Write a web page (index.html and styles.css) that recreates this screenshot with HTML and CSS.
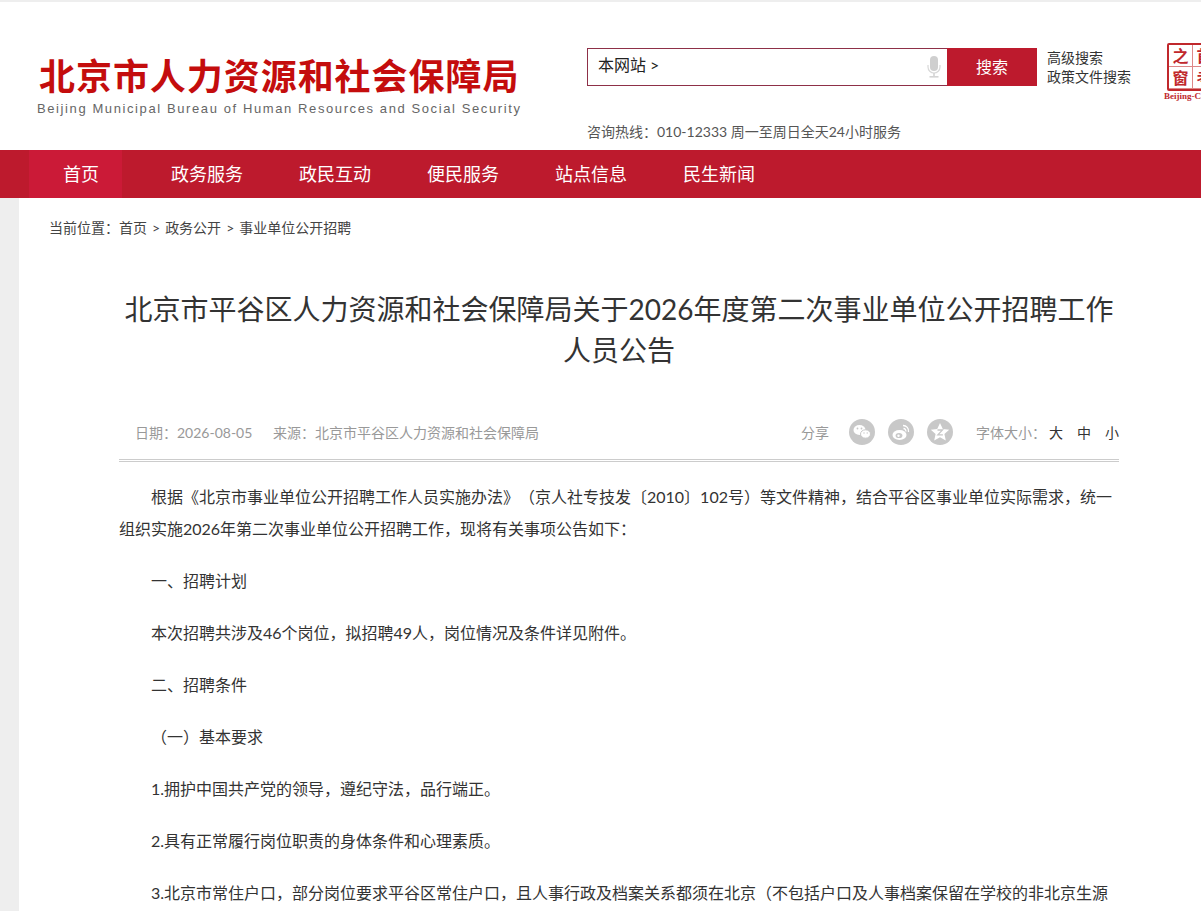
FILE: index.html
```html
<!DOCTYPE html>
<html lang="zh-CN">
<head>
  <meta charset="UTF-8">
  <title>北京市人力资源和社会保障局</title>
  <link rel="stylesheet" href="styles.css">
</head>
<body>
  <div id="page">
    <div id="header">
      <div id="logo">
        <div id="logo-cn">北京市人力资源和社会保障局</div>
        <div id="logo-en">Beijing Municipal Bureau of Human Resources and Social Security</div>
      </div>
      <div id="search-area">
        <div id="search-row">
          <div id="search-box">
            <span id="search-scope">本网站 &gt;</span>
            <svg id="mic" width="14" height="22" viewBox="0 0 14 22">
              <rect x="3" y="0" width="8" height="15" rx="4" fill="#cfcfcf"/>
              <path d="M1 9v2a6 6 0 0 0 12 0V9" fill="none" stroke="#d8d8d8" stroke-width="1.2"/>
              <rect x="6.2" y="17" width="1.6" height="3" fill="#d4d4d4"/>
              <rect x="2.5" y="20" width="9" height="1.6" fill="#d4d4d4"/>
            </svg>
          </div>
          <div id="search-btn">搜索</div>
          <div id="search-links">
            <a>高级搜索</a>
            <a>政策文件搜索</a>
          </div>
          <div id="seal">
            <div id="seal-grid">
              <span>之</span><span>首</span><span>窗</span><span>考</span>
            </div>
            <div id="seal-en">Beijing-Capital</div>
          </div>
        </div>
        <div id="hotline">咨询热线：010-12333 周一至周日全天24小时服务</div>
      </div>
    </div>

    <div id="nav">
      <a class="nav-item active">首页</a>
      <a class="nav-item">政务服务</a>
      <a class="nav-item">政民互动</a>
      <a class="nav-item">便民服务</a>
      <a class="nav-item">站点信息</a>
      <a class="nav-item">民生新闻</a>
    </div>

    <div id="main">
      <div id="crumbs">当前位置：首页<i>&gt;</i>政务公开<i>&gt;</i>事业单位公开招聘</div>
      <div id="article">
        <h1>北京市平谷区人力资源和社会保障局关于2026年度第二次事业单位公开招聘工作人员公告</h1>
        <div id="meta">
          <div id="meta-left">
            <span>日期：2026-08-05</span>
            <span>来源：北京市平谷区人力资源和社会保障局</span>
          </div>
          <div id="meta-right">
            <span class="share-label">分享</span>
            <svg class="share-icon" viewBox="0 0 26 26">
              <circle cx="13" cy="13" r="13" fill="#c8c8c8"/>
              <ellipse cx="10.5" cy="11" rx="6" ry="5" fill="#fff"/>
              <ellipse cx="16.5" cy="15" rx="5" ry="4.2" fill="#fff" stroke="#c8c8c8"/>
              <circle cx="8.5" cy="9.5" r=".9" fill="#c8c8c8"/>
              <circle cx="12.5" cy="9.5" r=".9" fill="#c8c8c8"/>
              <circle cx="15" cy="14" r=".7" fill="#c8c8c8"/>
              <circle cx="18.2" cy="14" r=".7" fill="#c8c8c8"/>
            </svg>
            <svg class="share-icon" viewBox="0 0 26 26">
              <circle cx="13" cy="13" r="13" fill="#c8c8c8"/>
              <ellipse cx="11.5" cy="16" rx="7" ry="5" fill="#fff"/>
              <ellipse cx="11" cy="16.5" rx="3.4" ry="2.6" fill="#c8c8c8"/>
              <circle cx="10.5" cy="16.8" r="1.2" fill="#fff"/>
              <path d="M15 6.5a5.5 5.5 0 0 1 5.5 6.5M15.5 9.5a2.5 2.5 0 0 1 2.3 3" fill="none" stroke="#fff" stroke-width="1.3"/>
            </svg>
            <svg class="share-icon" viewBox="0 0 26 26">
              <circle cx="13" cy="13" r="13" fill="#c8c8c8"/>
              <path d="M13 4l2.8 6 6.4.7-4.8 4.3 1.4 6.4L13 18.2l-5.8 3.2 1.4-6.4-4.8-4.3 6.4-.7z" fill="#fff"/>
              <path d="M10.5 11h5l-4.6 4.8h5" fill="none" stroke="#c8c8c8" stroke-width="1.3"/>
            </svg>
            <span class="size-label">字体大小：</span>
            <a class="size-opt">大</a>
            <a class="size-opt">中</a>
            <a class="size-opt">小</a>
          </div>
        </div>
        <div id="content">
          <p>根据《北京市事业单位公开招聘工作人员实施办法》（京人社专技发〔2010〕102号）等文件精神，结合平谷区事业单位实际需求，统一组织实施2026年第二次事业单位公开招聘工作，现将有关事项公告如下：</p>
          <p>一、招聘计划</p>
          <p>本次招聘共涉及46个岗位，拟招聘49人，岗位情况及条件详见附件。</p>
          <p>二、招聘条件</p>
          <p>（一）基本要求</p>
          <p>1.拥护中国共产党的领导，遵纪守法，品行端正。</p>
          <p>2.具有正常履行岗位职责的身体条件和心理素质。</p>
          <p>3.北京市常住户口，部分岗位要求平谷区常住户口，且人事行政及档案关系都须在北京（不包括户口及人事档案保留在学校的非北京生源毕业生）。</p>
        </div>
      </div>
    </div>
  </div>
</body>
</html>
```

FILE: styles.css
```css
html, body {
  margin: 0;
  height: 911px;
  overflow: hidden;
}
body {
  background: #eeeeee;
  font-family: Lato, "Noto Sans CJK SC", sans-serif;
  color: #333;
  text-spacing-trim: space-all;
}
a {
  color: inherit;
}
#page {
  padding-top: 2px;
}

/* header */
#header {
  display: flex;
  height: 148px;
  background: #fff;
  overflow: hidden;
}
#logo {
  width: 587px;
  flex: none;
  padding: 51px 0 0 37px;
  box-sizing: border-box;
}
#logo-cn {
  padding-left: 2px;
  font-size: 36px;
  line-height: 46px;
  font-weight: 700;
  letter-spacing: 0.95px;
  color: #c40d0d;
  white-space: nowrap;
}
#logo-en {
  margin-top: 2px;
  font-family: "Liberation Sans", sans-serif;
  font-size: 13px;
  line-height: 16px;
  letter-spacing: 1.6px;
  color: #666;
  white-space: nowrap;
}
#search-area {
  flex: none;
  padding-top: 46px;
}
#search-row {
  display: flex;
}
#search-box {
  display: flex;
  flex: none;
  align-items: center;
  justify-content: space-between;
  width: 360px;
  height: 38px;
  box-sizing: border-box;
  padding: 0 5px 0 10px;
  border: 1px solid #8e3048;
  border-right: 0;
}
#search-scope {
  font-size: 16px;
  line-height: 32px;
  margin-bottom: 4px;
  color: #222;
}
#mic {
  margin-right: 1px;
  flex: none;
}
#search-btn {
  flex: none;
  width: 90px;
  height: 38px;
  line-height: 38px;
  text-align: center;
  font-size: 16px;
  color: #fff;
  background: #bd1a2d;
}
#search-links {
  display: flex;
  flex-direction: column;
  flex: none;
  width: 130px;
  padding-left: 10px;
  box-sizing: border-box;
  font-size: 14px;
  line-height: 19px;
  color: #333;
}
#seal {
  flex: none;
  margin-top: -5px;
  width: 70px;
}
#seal-grid {
  display: grid;
  grid-template-columns: 24px 24px;
  grid-auto-rows: 22px;
  width: 48px;
  border: 2px solid #c0282c;
  border-radius: 2px;
  background: #fff;
}
#seal-grid span {
  font-size: 16px;
  font-weight: 700;
  line-height: 21px;
  text-align: center;
  color: #c0282c;
  border-right: 1px solid #d88;
  border-bottom: 1px solid #d88;
}
#seal-en {
  margin-left: -3px;
  font-family: "Liberation Serif", serif;
  font-size: 9px;
  font-weight: 700;
  line-height: 11px;
  color: #c0282c;
  white-space: nowrap;
}
#hotline {
  margin-top: 20px;
  font-size: 14px;
  line-height: 20px;
  color: #555;
}

/* nav */
#nav {
  display: flex;
  height: 48px;
  padding-left: 29px;
  background: #bd1a2d;
}
.nav-item {
  padding: 0 28px;
  font-size: 18px;
  line-height: 49px;
  color: #fff;
}
.nav-item.active {
  padding: 0 23px 0 34px;
  margin-right: 21px;
  background: #cb1a37;
}

/* body of the page */
#main {
  margin-left: 19px;
  background: #fff;
  height: 713px;
  overflow: hidden;
}
#crumbs {
  padding: 20px 0 0 30px;
  font-size: 14px;
  line-height: 20px;
  color: #444;
}
#crumbs i {
  font-style: normal;
  margin: 0 5px;
}
#article {
  width: 1000px;
  margin-left: 100px;
}
h1 {
  margin: 0;
  padding-top: 51px;
  font-size: 28px;
  line-height: 41px;
  font-weight: 400;
  text-align: center;
  color: #333;
}
#meta {
  display: flex;
  justify-content: space-between;
  align-items: center;
  height: 55px;
  margin-top: 33px;
  padding-left: 16px;
  border-bottom: 3px double #ccc;
  font-size: 14px;
  color: #999;
}
#meta-left span {
  margin-right: 17px;
}
#meta-right {
  display: flex;
  align-items: center;
}
.share-label {
  margin-right: 20px;
}
.share-icon {
  width: 26px;
  height: 26px;
  margin-right: 13px;
}
.size-label {
  margin-left: 10px;
  margin-right: 3px;
}
.size-opt {
  width: 14px;
  margin-right: 14px;
  color: #333;
}
.size-opt:last-child {
  margin-right: 0;
}
#content {
  padding-top: 19px;
}
#content p {
  margin: 0 0 20px;
  font-size: 16px;
  line-height: 32px;
  text-indent: 32px;
  color: #333;
}
```
